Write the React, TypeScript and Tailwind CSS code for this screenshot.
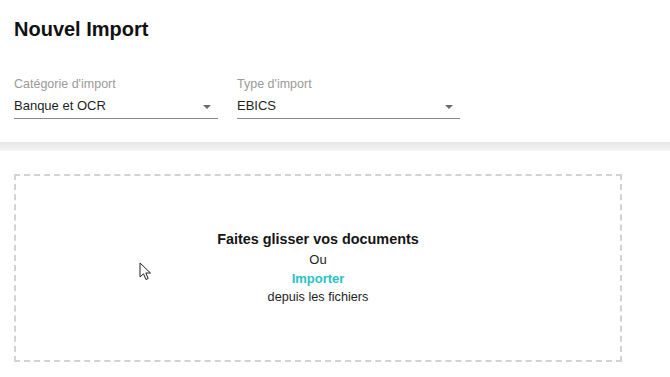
import React from 'react';

const Select: React.FC<{ label: string; value: string; width: string }> = ({ label, value, width }) => {
  return (
    <div className={`${width} flex flex-col`}>
      <span className="text-[12.5px] leading-[16px] text-[#9a9a9a]">{label}</span>
      <div className="mt-[6px] flex items-center justify-between border-b border-[#8a8a8a] pb-[4px] pr-[7px]">
        <span className="text-[13px] leading-[16px] text-[#1e1e1e]">{value}</span>
        <span className="mt-[2px] h-0 w-0 border-x-[4px] border-t-[4px] border-x-transparent border-t-[#6b6b6b]" />
      </div>
    </div>
  );
};

const App: React.FC = () => {
  return (
    <div className="relative h-[377px] w-[670px] overflow-hidden bg-white font-['Liberation_Sans',Arial,sans-serif]">
      {/* Header */}
      <div className="h-[142px] px-[14px] pt-[16px]">
        <h1 className="text-[20px] font-bold leading-[26px] text-[#111]">Nouvel Import</h1>
        <div className="mt-[34px] flex gap-[19px]">
          <Select label="Catégorie d'import" value="Banque et OCR" width="w-[204px]" />
          <Select label="Type d'import" value="EBICS" width="w-[223px]" />
        </div>
      </div>

      <div className="h-[9px] bg-gradient-to-b from-[#e6e6e6] to-[#f5f5f5]" />

      {/* Drop zone */}
      <div className="pl-[14px] pt-[23px]">
        <div className="flex h-[188px] w-[608px] flex-col items-center justify-center border-2 border-dashed border-[#d2d2d2] text-center">
          <p className="text-[14.4px] font-bold leading-[19px] text-[#151515]">Faites glisser vos documents</p>
          <p className="mt-[1px] text-[13px] leading-[19px] text-[#1e1e1e]">Ou</p>
          <p className="text-[13px] font-bold leading-[19px] text-[#27c2c6]">Importer</p>
          <p className="text-[12.7px] leading-[19px] text-[#1e1e1e]">depuis les fichiers</p>
        </div>
      </div>

      {/* Mouse pointer */}
      <svg className="absolute left-[139px] top-[262px]" width="14" height="20" viewBox="0 0 14 20">
        <path d="M1 1 L1 15 L4.5 11.8 L7 17.5 L9.2 16.5 L6.8 11 L11.5 11 Z" fill="#fff" stroke="#222" strokeWidth="1" strokeLinejoin="round" />
      </svg>
    </div>
  );
};

export default App;
